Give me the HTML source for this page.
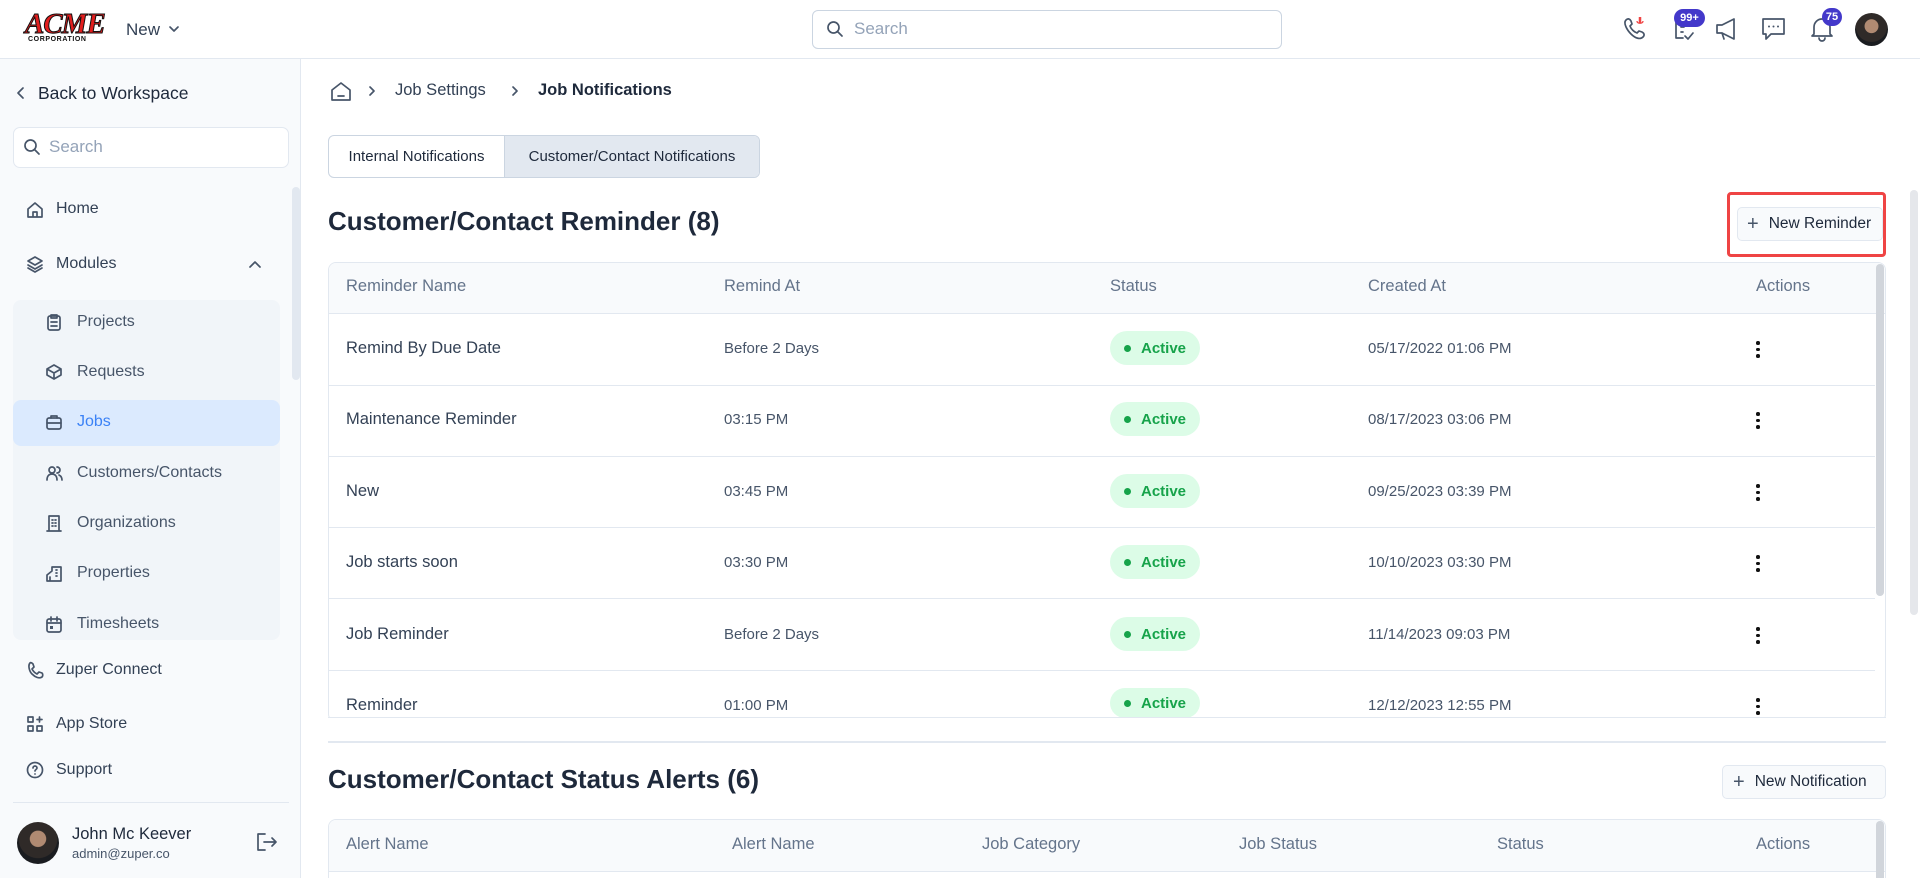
<!DOCTYPE html>
<html style="height:878px;overflow:hidden"><head><meta charset="utf-8"><style>
*{box-sizing:border-box;margin:0;padding:0}
body{width:1920px;height:878px;overflow:hidden;background:#fff;font-family:"Liberation Sans",sans-serif;color:#1e293b;position:relative}
.abs{position:absolute}
svg{display:block}
.hdr{left:0;top:0;width:1920px;height:59px;border-bottom:1px solid #e2e8f0;background:#fff}
.side{left:0;top:59px;width:301px;height:819px;background:#f8fafc;border-right:1px solid #e2e8f0}
.nav{position:absolute;font-size:16px;color:#334155;display:flex;align-items:center;gap:12px}
.sub{position:absolute;left:45px;font-size:16px;color:#475569;display:flex;align-items:center;gap:10px}
.th{position:absolute;font-size:16.5px;color:#64748b}
.td{position:absolute;font-size:16.5px;color:#334155}
.tdm{position:absolute;font-size:15px;color:#475569}
.badge{position:absolute;left:1110px;width:90px;height:34px;border-radius:17px;background:#dcfce7;color:#16a34a;font-size:15px;font-weight:bold;display:flex;align-items:center;padding-left:14px;gap:10px}
.badge i{width:7px;height:7px;border-radius:50%;background:#16a34a;display:block}
.dots{position:absolute;left:1756px;width:4px}
.dots i{display:block;width:3.5px;height:3.5px;background:#111;border-radius:50%;margin-bottom:3px}
.ic{stroke:#475569;fill:none;stroke-width:1.7;stroke-linecap:round;stroke-linejoin:round}
</style></head><body>
<div class="abs hdr"></div>
<div class="abs" style="left:25px;top:11px;font-family:'Liberation Serif',serif;font-weight:bold;font-size:29px;color:#e11d1d;letter-spacing:-1px;line-height:26px;-webkit-text-stroke:1px #111;font-style:italic">ACME</div>
<div class="abs" style="left:28px;top:36px;font-size:7px;font-weight:bold;letter-spacing:0.6px;color:#111">CORPORATION</div>
<div class="abs" style="left:126px;top:20px;font-size:17px;color:#334155">New</div>
<svg class="abs" style="left:168px;top:24px" width="12" height="10"><path d="M2 3l4 4 4-4" class="ic" stroke-width="1.4"/></svg>
<div class="abs" style="left:812px;top:10px;width:470px;height:39px;border:1px solid #cbd5e1;border-radius:6px"></div>
<svg class="abs" style="left:826px;top:20px" width="18" height="18"><circle cx="7.5" cy="7.5" r="5.5" class="ic" stroke="#64748b"/><path d="M12 12l4 4" class="ic" stroke="#64748b"/></svg>
<div class="abs" style="left:854px;top:19px;font-size:17px;color:#94a3b8">Search</div>
<svg class="abs" style="left:1620px;top:14px" width="30" height="30"><path d="M6 6c2-2 4-1 5 1l1 3-2 2c1 3 4 6 7 7l2-2 3 1c2 1 3 3 1 5-3 3-8 1-12-3S3 9 6 6z" class="ic"/><path d="M20 3v6" stroke="#ef4444" stroke-width="2.5"/><path d="M17 7c0 3 6 3 6 0" stroke="#ef4444" fill="none" stroke-width="1.3"/></svg>
<svg class="abs" style="left:1670px;top:14px" width="30" height="30"><path d="M8 6h-2v18h7M20 6h2v6" class="ic"/><path d="M11 13h3M11 18h2M15 22l3 3 5-6" class="ic"/></svg>
<div class="abs" style="left:1674px;top:9px;width:31px;height:18px;border-radius:9px;background:#4338ca;color:#fff;font-size:11px;font-weight:bold;text-align:center;line-height:18px">99+</div>
<svg class="abs" style="left:1712px;top:14px" width="30" height="30"><path d="M5 11h5l12-6v20l-12-6H5z M10 19l2 6" class="ic"/></svg>
<svg class="abs" style="left:1759px;top:14px" width="30" height="30"><path d="M4 5h21v15H12l-5 5v-5H4z" class="ic"/><circle cx="10" cy="12.5" r="1" fill="#475569"/><circle cx="14.5" cy="12.5" r="1" fill="#475569"/><circle cx="19" cy="12.5" r="1" fill="#475569"/></svg>
<svg class="abs" style="left:1807px;top:14px" width="30" height="30"><path d="M7 20V13a8 8 0 0116 0v7l2 2H5zM12 24a3 3 0 006 0" class="ic"/></svg>
<div class="abs" style="left:1822px;top:8px;width:20px;height:18px;border-radius:9px;background:#4338ca;color:#fff;font-size:11px;font-weight:bold;text-align:center;line-height:18px">75</div>
<div class="abs" style="left:1855px;top:13px;width:33px;height:33px;border-radius:50%;background:radial-gradient(circle at 50% 40%,#b08a72 0 26%,#2f2a28 28% 60%,#1a1c20 62%)"></div>

<div class="abs side"></div>
<svg class="abs" style="left:15px;top:85px" width="12" height="16"><path d="M8 3l-5 5 5 5" class="ic" stroke="#1e293b" stroke-width="1.8"/></svg>
<div class="abs" style="left:38px;top:83px;font-size:17.5px;color:#1e293b">Back to Workspace</div>
<div class="abs" style="left:13px;top:127px;width:276px;height:41px;border:1px solid #e2e8f0;border-radius:7px;background:#fff"></div>
<svg class="abs" style="left:23px;top:138px" width="18" height="18"><circle cx="7.5" cy="7.5" r="5.5" class="ic" stroke="#64748b"/><path d="M12 12l4 4" class="ic" stroke="#64748b"/></svg>
<div class="abs" style="left:49px;top:137px;font-size:17px;color:#94a3b8">Search</div>
<div class="nav" style="left:26px;top:200px"><svg width="18" height="18"><path d="M2 9l7-6 7 6v8H2z M7 17v-5h4v5" class="ic"/></svg>Home</div>
<div class="nav" style="left:26px;top:255px"><svg width="18" height="18"><path d="M9 2l7 4-7 4-7-4z M2 10l7 4 7-4 M2 13l7 4 7-4" class="ic"/></svg>Modules</div>
<svg class="abs" style="left:248px;top:258px" width="14" height="12"><path d="M2 9l5-5 5 5" class="ic" stroke-width="1.8"/></svg>
<div class="abs" style="left:13px;top:300px;width:267px;height:340px;background:#f1f5f9;border-radius:8px"></div>
<div class="abs" style="left:13px;top:400px;width:267px;height:46px;background:#dbeafe;border-radius:8px"></div>
<div class="abs" style="left:292px;top:187px;width:8px;height:193px;background:#e2e8f0;border-radius:4px"></div>
<div class="sub" style="top:313px"><svg width="18" height="18"><rect x="3" y="3" width="12" height="14" rx="2" class="ic"/><path d="M6 2h6v3H6zM6 9h6M6 13h6" class="ic"/></svg><span style="margin-left:4px">Projects</span></div>
<div class="sub" style="top:363px"><svg width="18" height="18"><path d="M9 2l7 4v6l-7 4-7-4V6z M2 6l7 4 7-4 M9 10v6" class="ic"/></svg><span style="margin-left:4px">Requests</span></div>
<div class="sub" style="top:413px;color:#3b82f6"><svg width="18" height="18"><rect x="2" y="5" width="14" height="11" rx="2" class="ic" stroke="#3b82f6"/><path d="M6 5V3h6v2M2 10h14" class="ic" stroke="#3b82f6"/></svg><span style="margin-left:4px">Jobs</span></div>
<div class="sub" style="top:464px"><svg width="18" height="18"><circle cx="7" cy="6" r="3" class="ic"/><path d="M2 16c0-4 2-6 5-6s5 2 5 6M12 3a3 3 0 010 6M14 11c2 1 3 3 3 5" class="ic"/></svg><span style="margin-left:4px">Customers/Contacts</span></div>
<div class="sub" style="top:514px"><svg width="18" height="18"><path d="M4 2h10v15H4zM2 17h14M7 6h1M10 6h1M7 9h1M10 9h1M7 12h1M10 12h1" class="ic"/></svg><span style="margin-left:4px">Organizations</span></div>
<div class="sub" style="top:564px"><svg width="18" height="18"><path d="M7 3h9v14H2v-6l5-4zM5 17v-4M11 6h1M11 9h1M11 12h1" class="ic"/></svg><span style="margin-left:4px">Properties</span></div>
<div class="sub" style="top:615px"><svg width="18" height="18"><rect x="2" y="4" width="14" height="13" rx="2" class="ic"/><path d="M2 8h14M6 2v4M12 2v4" class="ic"/><rect x="5" y="11" width="3" height="3" fill="#475569"/></svg><span style="margin-left:4px">Timesheets</span></div>
<div class="nav" style="left:26px;top:661px"><svg width="18" height="18"><path d="M4 2c1-1 2 0 3 1l1 3-2 2c1 2 3 4 5 5l2-2 3 1c1 1 1 3 0 4-3 2-7 0-10-3S2 4 4 2z" class="ic"/></svg>Zuper Connect</div>
<div class="nav" style="left:26px;top:715px"><svg width="18" height="18"><rect x="2" y="2" width="5" height="5" class="ic"/><rect x="2" y="11" width="5" height="5" class="ic"/><rect x="11" y="11" width="5" height="5" class="ic"/><path d="M13.5 2v5M11 4.5h5" class="ic"/></svg>App Store</div>
<div class="nav" style="left:26px;top:761px"><svg width="18" height="18"><circle cx="9" cy="9" r="7.5" class="ic"/><path d="M7 7a2 2 0 114 0c0 1.5-2 1.5-2 3" class="ic"/><circle cx="9" cy="13" r=".9" fill="#475569"/></svg>Support</div>
<div class="abs" style="left:13px;top:802px;width:276px;height:1px;background:#e2e8f0"></div>
<div class="abs" style="left:17px;top:822px;width:42px;height:42px;border-radius:50%;background:radial-gradient(circle at 50% 40%,#b08a72 0 24%,#2f2a28 26% 58%,#1a1c20 60%)"></div>
<div class="abs" style="left:72px;top:825px;font-size:16.5px;color:#1e293b">John Mc Keever</div>
<div class="abs" style="left:72px;top:846px;font-size:13px;color:#475569">admin@zuper.co</div>
<svg class="abs" style="left:254px;top:831px" width="24" height="22"><path d="M11 3H4v16h7M10 11h12M18 7l4 4-4 4" class="ic" stroke="#64748b"/></svg>

<svg class="abs" style="left:330px;top:80px" width="22" height="22"><path d="M2 10l9-7 9 7v10H2z M8 16h6" class="ic" stroke="#334155"/></svg>
<svg class="abs" style="left:367px;top:85px" width="10" height="12"><path d="M3 2l4 4-4 4" class="ic" stroke="#94a3b8"/></svg>
<div class="abs" style="left:395px;top:81px;font-size:16.5px;color:#334155">Job Settings</div>
<svg class="abs" style="left:510px;top:85px" width="10" height="12"><path d="M3 2l4 4-4 4" class="ic" stroke="#94a3b8"/></svg>
<div class="abs" style="left:538px;top:81px;font-size:16.5px;font-weight:bold;color:#1e293b">Job Notifications</div>

<div class="abs" style="left:328px;top:135px;width:432px;height:43px;border:1px solid #cbd5e1;border-radius:6px;overflow:hidden;display:flex;font-size:15px;color:#1e293b">
<div style="width:176px;display:flex;align-items:center;justify-content:center;border-right:1px solid #cbd5e1">Internal Notifications</div>
<div style="flex:1;background:#e2e8f0;display:flex;align-items:center;justify-content:center">Customer/Contact Notifications</div></div>

<div class="abs" style="left:328px;top:206px;font-size:26px;font-weight:bold;color:#1e293b">Customer/Contact Reminder (8)</div>
<div class="abs" style="left:1727px;top:192px;width:159px;height:65px;border:3px solid #ef4444;border-radius:4px"></div>
<div class="abs" style="left:1737px;top:207px;width:146px;height:34px;border:1px solid #e2e8f0;border-radius:5px;background:#f8fafc;font-size:15.5px;color:#1e293b;display:flex;align-items:center;padding-left:9px;gap:10px"><span style="font-size:20px;color:#475569">+</span>New Reminder</div>
<div class="abs" style="left:1910px;top:190px;width:8px;height:425px;background:#e5e7eb;border-radius:4px"></div>

<div class="abs" style="left:328px;top:262px;width:1558px;height:460px;border:1px solid #e2e8f0;border-radius:8px;overflow:hidden">
<div style="height:51px;background:#f8fafc;border-bottom:1px solid #e2e8f0"></div>
</div>
<div class="abs" style="left:1876px;top:264px;width:8px;height:332px;background:#d1d5db;border-radius:4px"></div>
<div class="th" style="left:346px;top:277px">Reminder Name</div>
<div class="th" style="left:724px;top:277px">Remind At</div>
<div class="th" style="left:1110px;top:277px">Status</div>
<div class="th" style="left:1368px;top:277px">Created At</div>
<div class="th" style="left:1756px;top:277px">Actions</div>

<div class="abs" style="left:329px;top:385px;width:1546px;height:1px;background:#e2e8f0"></div>
<div class="abs" style="left:329px;top:456px;width:1546px;height:1px;background:#e2e8f0"></div>
<div class="abs" style="left:329px;top:527px;width:1546px;height:1px;background:#e2e8f0"></div>
<div class="abs" style="left:329px;top:598px;width:1546px;height:1px;background:#e2e8f0"></div>
<div class="abs" style="left:329px;top:670px;width:1546px;height:1px;background:#e2e8f0"></div>

<div class="td" style="left:346px;top:339px">Remind By Due Date</div><div class="tdm" style="left:724px;top:340px">Before 2 Days</div><div class="badge" style="top:331px"><i></i>Active</div><div class="tdm" style="left:1368px;top:340px">05/17/2022 01:06 PM</div><div class="dots" style="top:341px"><i></i><i></i><i></i></div>
<div class="td" style="left:346px;top:410px">Maintenance Reminder</div><div class="tdm" style="left:724px;top:411px">03:15 PM</div><div class="badge" style="top:402px"><i></i>Active</div><div class="tdm" style="left:1368px;top:411px">08/17/2023 03:06 PM</div><div class="dots" style="top:412px"><i></i><i></i><i></i></div>
<div class="td" style="left:346px;top:482px">New</div><div class="tdm" style="left:724px;top:483px">03:45 PM</div><div class="badge" style="top:474px"><i></i>Active</div><div class="tdm" style="left:1368px;top:483px">09/25/2023 03:39 PM</div><div class="dots" style="top:484px"><i></i><i></i><i></i></div>
<div class="td" style="left:346px;top:553px">Job starts soon</div><div class="tdm" style="left:724px;top:554px">03:30 PM</div><div class="badge" style="top:545px"><i></i>Active</div><div class="tdm" style="left:1368px;top:554px">10/10/2023 03:30 PM</div><div class="dots" style="top:555px"><i></i><i></i><i></i></div>
<div class="td" style="left:346px;top:625px">Job Reminder</div><div class="tdm" style="left:724px;top:626px">Before 2 Days</div><div class="badge" style="top:617px"><i></i>Active</div><div class="tdm" style="left:1368px;top:626px">11/14/2023 09:03 PM</div><div class="dots" style="top:627px"><i></i><i></i><i></i></div>
<div class="td" style="left:346px;top:696px">Reminder</div><div class="tdm" style="left:724px;top:697px">01:00 PM</div><div class="badge" style="top:688px;height:30px"><i></i>Active</div><div class="tdm" style="left:1368px;top:697px">12/12/2023 12:55 PM</div><div class="dots" style="top:698px"><i></i><i></i><i></i></div>
<div class="abs" style="left:329px;top:718px;width:1556px;height:22px;background:#fff"></div>
<div class="abs" style="left:328px;top:717px;width:1558px;height:1px;background:#e2e8f0"></div>

<div class="abs" style="left:328px;top:741px;width:1558px;height:2px;background:#e2e8f0"></div>
<div class="abs" style="left:328px;top:764px;font-size:26px;font-weight:bold;color:#1e293b">Customer/Contact Status Alerts (6)</div>
<div class="abs" style="left:1722px;top:765px;width:164px;height:34px;border:1px solid #e2e8f0;border-radius:5px;background:#f8fafc;font-size:15.5px;color:#1e293b;display:flex;align-items:center;padding-left:10px;gap:10px"><span style="font-size:20px;color:#475569">+</span>New Notification</div>
<div class="abs" style="left:328px;top:819px;width:1558px;height:59px;border:1px solid #e2e8f0;border-bottom:none;border-radius:8px 8px 0 0;overflow:hidden"><div style="height:52px;background:#f8fafc;border-bottom:1px solid #e2e8f0"></div></div>
<div class="abs" style="left:1876px;top:821px;width:8px;height:57px;background:#d1d5db;border-radius:4px 4px 0 0"></div>
<div class="th" style="left:346px;top:835px">Alert Name</div>
<div class="th" style="left:732px;top:835px">Alert Name</div>
<div class="th" style="left:982px;top:835px">Job Category</div>
<div class="th" style="left:1239px;top:835px">Job Status</div>
<div class="th" style="left:1497px;top:835px">Status</div>
<div class="th" style="left:1756px;top:835px">Actions</div>
</body></html>
